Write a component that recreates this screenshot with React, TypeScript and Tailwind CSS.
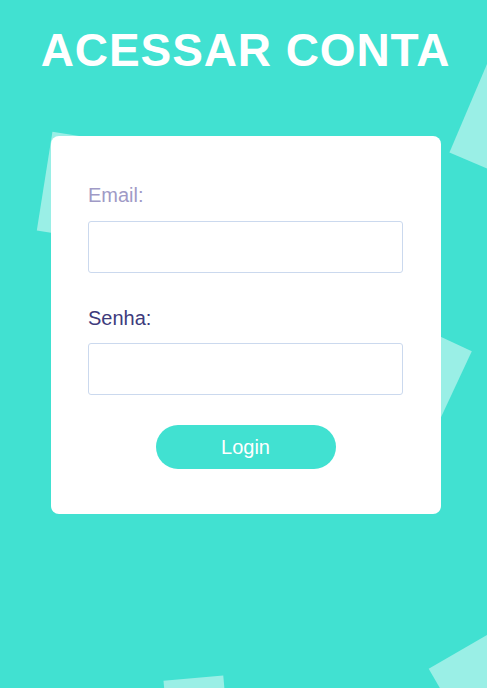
import React from "react";

// Login screen: turquoise backdrop with a few pale floating squares,
// a bold title and a white card holding the form.
const shapes = [
  "left-[44px] top-[139px] h-[100px] w-[100px] rotate-[9deg]",
  "left-[465px] top-[76px] h-[100px] w-[100px] rotate-[23deg]",
  "left-[367px] top-[328px] h-[90px] w-[90px] rotate-[25deg]",
  "left-[447px] top-[637px] h-[100px] w-[100px] -rotate-[30deg]",
  "left-[166px] top-[678px] h-[60px] w-[60px] -rotate-[5deg]",
];

export default function App() {
  return (
    <div
      className="relative h-[688px] w-full overflow-hidden bg-[#41e1d1]"
      style={{ fontFamily: '"Liberation Sans", Arial, sans-serif' }}
    >
      {/* floating squares */}
      {shapes.map((cls) => (
        <div key={cls} className={`absolute bg-[#9aefe6] ${cls}`} />
      ))}

      <div className="relative flex flex-col">
        <h1 className="pl-[4px] pt-[27px] text-center text-[46px] font-bold leading-[46px] tracking-[0.9px] text-white">
          ACESSAR CONTA
        </h1>

        <form
          className="ml-[51px] mt-[63px] flex w-[390px] flex-col rounded-lg bg-white pb-[45px] pl-[37px] pr-[38px] pt-[47px]"
          onSubmit={(e) => e.preventDefault()}
        >
          <label className="text-[20px] leading-6 text-[#a09ac6]">Email:</label>
          <input
            type="email"
            className="mt-[14px] h-[52px] w-full rounded-[3px] border border-[#cbd9ee] bg-white px-3 outline-none"
          />

          <label className="mt-[33px] text-[20px] leading-6 text-[#3e3b7c]">Senha:</label>
          <input
            type="password"
            className="mt-[13px] h-[52px] w-full rounded-[3px] border border-[#cbd9ee] bg-white px-3 outline-none"
          />

          <button
            type="submit"
            className="mx-auto mt-[30px] h-[44px] w-[180px] rounded-full bg-[#41e1d1] text-[20px] text-white"
          >
            Login
          </button>
        </form>
      </div>
    </div>
  );
}
